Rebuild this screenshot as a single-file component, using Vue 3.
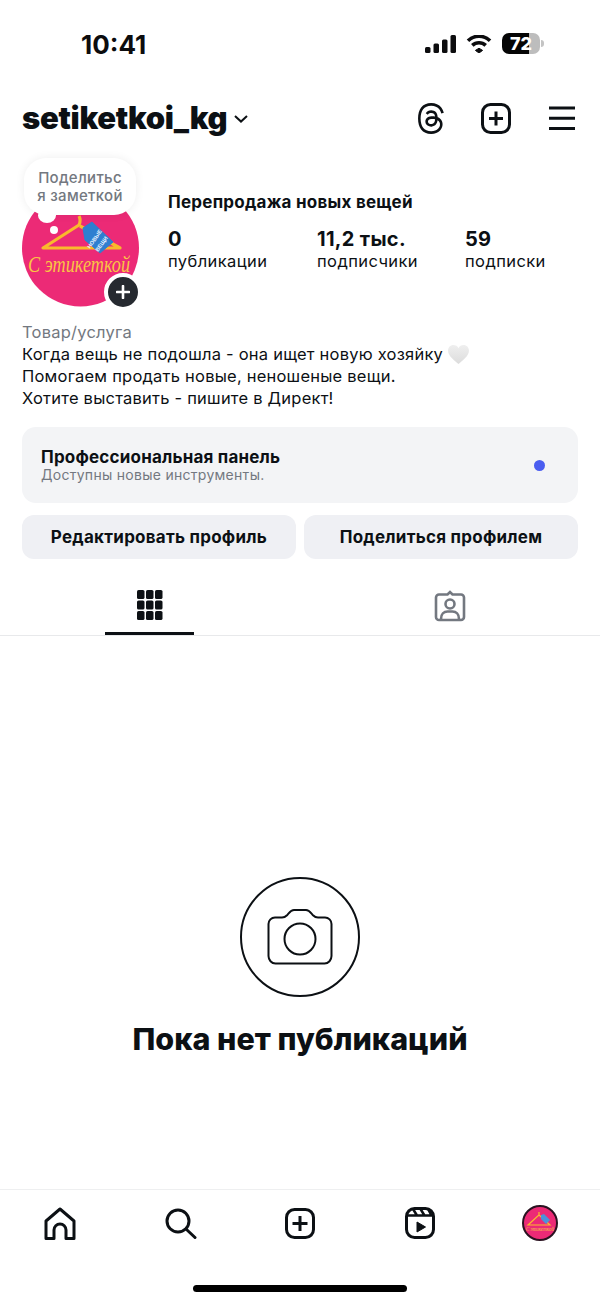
<script setup>
const stats = [
  { value: '0', label: 'публикации' },
  { value: '11,2 тыс.', label: 'подписчики' },
  { value: '59', label: 'подписки' },
]
const threads = 'M141.537 88.9883C140.71 88.5919 139.87 88.2104 139.019 87.8451C137.537 60.5382 122.616 44.905 97.5619 44.745C97.4484 44.7443 97.3355 44.7443 97.222 44.7443C82.2364 44.7443 69.7731 51.1409 62.102 62.7807L75.881 72.2328C81.6116 63.5383 90.6052 61.6848 97.2286 61.6848C97.3051 61.6848 97.3819 61.6848 97.4576 61.6855C105.707 61.7381 111.932 64.1366 115.961 68.814C118.893 72.2193 120.854 76.925 121.825 82.8638C114.511 81.6207 106.601 81.2385 98.145 81.7233C74.3247 83.0954 59.0111 96.9879 60.0396 116.292C60.5615 126.084 65.4397 134.508 73.775 140.011C80.8224 144.663 89.899 146.938 99.3323 146.423C111.79 145.74 121.563 140.987 128.381 132.296C133.559 125.696 136.834 117.143 138.28 106.366C144.217 109.949 148.617 114.664 151.047 120.332C155.179 129.967 155.42 145.8 142.501 158.708C131.182 170.016 117.576 174.908 97.0135 175.059C74.2042 174.89 56.9538 167.575 45.7381 153.317C35.2355 139.966 29.8077 120.682 29.6052 96C29.8077 71.3178 35.2355 52.0336 45.7381 38.6827C56.9538 24.4249 74.2039 17.11 97.0132 16.9405C119.988 17.1113 137.539 24.4614 149.184 38.788C154.894 45.8136 159.199 54.6488 162.037 64.9503L178.184 60.6422C174.744 47.9622 169.331 37.0357 161.965 27.974C147.036 9.60668 125.202 0.195148 97.0695 0H96.9569C68.8816 0.19447 47.2921 9.6418 32.7883 28.0793C19.8819 44.4864 13.2244 67.3157 13.0007 95.9325L13 96L13.0007 96.0675C13.2244 124.684 19.8819 147.514 32.7883 163.921C47.2921 182.358 68.8816 191.806 96.9569 192H97.0695C122.03 191.827 139.624 185.292 154.118 170.811C173.081 151.866 172.51 128.119 166.26 113.541C161.776 103.087 153.227 94.5962 141.537 88.9883ZM98.4405 129.507C88.0005 130.095 77.1544 125.409 76.6196 115.372C76.2232 107.93 81.9158 99.626 99.0812 98.6368C101.047 98.5234 102.976 98.468 104.871 98.468C111.106 98.468 116.939 99.0737 122.242 100.233C120.264 124.935 108.662 128.946 98.4405 129.507Z'
</script>

<template>
  <div class="page">
    <div class="status">
      <span class="time">10:41</span>
      <div class="status-icons">
        <svg class="signal" width="31" height="18" viewBox="0 0 31 18">
          <rect x="0" y="12" width="5.5" height="6" rx="1.5" />
          <rect x="8.5" y="8.5" width="5.5" height="9.5" rx="1.5" />
          <rect x="17" y="4.5" width="5.5" height="13.5" rx="1.5" />
          <rect x="25.5" y="0" width="5.5" height="18" rx="1.5" />
        </svg>
        <svg class="wifi" width="26" height="18" viewBox="0 0 26 18">
          <path d="M13 13.2 16.6 15.4 13 18 9.4 15.4Z" stroke="#0c0c0e" stroke-width="1" stroke-linejoin="round" />
          <path d="M6.3 10.4C10 6.8 16 6.8 19.7 10.4" class="wifi-arc" />
          <path d="M2 5.7C8 -.2 18 -.2 24 5.7" class="wifi-arc" />
        </svg>
        <div class="battery">
          <div class="battery-body"><span class="battery-num">72</span></div>
          <i class="battery-nub"></i>
        </div>
      </div>
    </div>

    <header class="top">
      <div class="user">
        <span class="username">setiketkoi_kg</span>
        <svg width="14" height="8" viewBox="0 0 14 8" class="chev"><path d="M1 1l6 5.6L13 1" /></svg>
      </div>
      <div class="top-icons">
        <svg class="threads" width="30" height="31" viewBox="0 0 192 192" preserveAspectRatio="none"><path :d="threads" /></svg>
        <svg class="line-icon" width="30" height="31" viewBox="0 0 30 31">
          <rect x="1.5" y="1.5" width="27" height="28" rx="8" />
          <path d="M15 8.5v14M8 15.5h14" />
        </svg>
        <svg class="line-icon burger" width="26" height="24" viewBox="0 0 26 24">
          <path d="M0 2h26M0 12.2h26M0 22.5h26" />
        </svg>
      </div>
    </header>

    <section class="profile">
      <div class="avatar-wrap">
        <svg class="avatar" width="117" height="117" viewBox="22 190 117 117">
          <circle cx="80.5" cy="248" r="58.5" fill="#ec2a76" />
          <circle cx="54" cy="230" r="4" fill="#fff" />
          <path d="M79 216c1.500 3 1.500 6 0 9L43 248h77L80 226" fill="none" stroke="#f9b92c" stroke-width="3.200" stroke-linejoin="round" />
          <path d="M83 228 92 222 113 242 100 253 85 240Z" fill="#2e7fd0" stroke="#2e7fd0" stroke-linejoin="round" />
          <text x="96" y="240" class="tag-text" transform="rotate(-55 96 240)" text-anchor="middle">НОВЫЕ</text>
          <text x="103" y="245" class="tag-text" transform="rotate(-55 103 245)" text-anchor="middle">ВЕЩИ</text>
          <text x="28" y="272" class="logo-text" textLength="102" lengthAdjust="spacingAndGlyphs">С этикеткой</text>
        </svg>
        <div class="note">
          <span>Поделитьс</span>
          <span>я заметкой</span>
          <i class="note-tail"></i>
        </div>
        <div class="add-badge">
          <svg width="14" height="14" viewBox="0 0 14 14"><path d="M7 1v12M1 7h12" /></svg>
        </div>
      </div>
      <div class="info">
        <div class="name">Перепродажа новых вещей</div>
        <div class="stats">
          <div v-for="s in stats" :key="s.label" class="stat">
            <div class="stat-value">{{ s.value }}</div>
            <div class="stat-label">{{ s.label }}</div>
          </div>
        </div>
      </div>
    </section>

    <section class="bio">
      <div class="category">Товар/услуга</div>
      <div class="bio-line">Когда вещь не подошла - она ищет новую хозяйку
        <svg class="heart" width="21" height="19" viewBox="0 0 22 20">
          <defs>
            <linearGradient id="hg" x1="0" y1="0" x2="0" y2="1">
              <stop offset="0" stop-color="#efefef" />
              <stop offset="1" stop-color="#dcdcdc" />
            </linearGradient>
          </defs>
          <path d="M11 20C7 16.500 0 11.500 0 6 0 2.500 2.500 0 5.600 0 8 0 10 1.300 11 3.300 12 1.300 14 0 16.400 0 19.500 0 22 2.500 22 6 22 11.500 15 16.500 11 20Z" fill="url(#hg)" />
        </svg>
      </div>
      <div class="bio-line">Помогаем продать новые, неношеные вещи.</div>
      <div class="bio-line">Хотите выставить - пишите в Директ!</div>
    </section>

    <section class="panel">
      <div>
        <div class="panel-title">Профессиональная панель</div>
        <div class="panel-sub">Доступны новые инструменты.</div>
      </div>
      <i class="dot"></i>
    </section>

    <div class="buttons">
      <button class="btn">Редактировать профиль</button>
      <button class="btn">Поделиться профилем</button>
    </div>

    <nav class="tabs">
      <div class="tab">
        <svg width="25.500" height="30" viewBox="0 0 25.500 30" class="grid-icon">
          <rect v-for="c in 9" :key="c" :x="((c - 1) % 3) * 9" :y="Math.floor((c - 1) / 3) * 10.500" width="7.500" height="9" rx="1.600" />
        </svg>
        <i class="tab-bar"></i>
      </div>
      <div class="tab">
        <svg class="tag-icon" width="32" height="32" viewBox="0 0 32 32">
          <path d="M11 4.500h2.500L16 2l2.500 2.500H27a3 3 0 0 1 3 3V27a3 3 0 0 1-3 3H5a3 3 0 0 1-3-3V7.500a3 3 0 0 1 3-3h6Z" />
          <circle cx="16" cy="14" r="4.500" />
          <path d="M7 29c0-5 3-7.500 6.500-7.500h5c3.500 0 6.500 2.500 6.500 7.500" />
        </svg>
      </div>
    </nav>

    <main class="empty">
      <div class="empty-circle">
        <svg width="66" height="56" viewBox="0 0 66 56">
          <path d="M8 8.500h7c2 0 3.500-.8 5-2.300 2.500-2.700 3.800-5.200 7-5.200h12c3.200 0 4.500 2.500 7 5.200 1.500 1.500 3 2.300 5 2.300h7c3.600 0 6.500 2.800 6.500 6.500v32c0 4-3 7.500-7 7.500H8.500c-4 0-7-3.500-7-7.500V15c0-3.700 2.900-6.500 6.500-6.500Z" />
          <circle cx="33" cy="30" r="15.500" />
        </svg>
      </div>
      <h1 class="empty-title">Пока нет публикаций</h1>
    </main>

    <footer class="bottom">
      <div class="bottom-icons">
        <svg class="line-icon" width="32" height="33" viewBox="0 0 32 33">
          <path d="M2 31.500V14L16 2l14 12v17.500H22V23a6 6 0 0 0-12 0v8.500Z" stroke-linejoin="round" />
        </svg>
        <svg class="line-icon" width="33" height="33" viewBox="0 0 33 33">
          <circle cx="14" cy="14" r="11" />
          <path d="M22 22 31 30.500" stroke-linecap="round" />
        </svg>
        <svg class="line-icon" width="30" height="31" viewBox="0 0 30 31">
          <rect x="1.500" y="1.500" width="27" height="28" rx="8" />
          <path d="M15 8v15M7.500 15.500h15" />
        </svg>
        <svg class="line-icon" width="30" height="32" viewBox="0 0 30 32">
          <rect x="1.500" y="1.500" width="27" height="29" rx="8" />
          <path d="M2 8.500h26M8 2l4 6.500M15.500 2l4 6.500M23 2l3.500 6.500" stroke-width="2.500" />
          <path d="M12 15 20.500 20 12 25Z" class="solid" />
        </svg>
        <svg class="mini" width="36" height="36" viewBox="0 0 36 36">
          <circle cx="18" cy="18" r="17" fill="#ec2a76" stroke="#2a1220" stroke-width="2" />
          <path d="M17 7v3L6 20h22L17 10" fill="none" stroke="#f9b92c" stroke-width="1.200" />
          <path d="M19 10l3-1 6 6-4 4-5-5z" fill="#4c93da" />
          <text x="4" y="26" class="mini-text" textLength="28" lengthAdjust="spacingAndGlyphs">С этикеткой</text>
        </svg>
      </div>
      <i class="home-bar"></i>
    </footer>
  </div>
</template>

<style scoped>
.page {
  width: 600px;
  height: 1303px;
  display: flex;
  flex-direction: column;
  background: #fff;
  color: #0c1014;
  font-family: Inter, "Liberation Sans", sans-serif;
  overflow: hidden;
}
i { display: block; }

.status {
  height: 90px;
  flex: none;
  display: flex;
  justify-content: space-between;
  align-items: flex-start;
  padding: 30px 56px 0 81px;
  box-sizing: border-box;
}
.time { font-size: 26px; font-weight: 700; line-height: 30px; color: #0c0c0e; }
.status-icons { display: flex; align-items: center; margin-top: 3px; }
.signal { fill: #0c0c0e; }
.wifi { margin-left: 10px; fill: #0c0c0e; }
.wifi-arc { fill: none; stroke: #0c0c0e; stroke-width: 3.600; }
.battery { display: flex; align-items: center; margin-left: 10px; }
.battery-body {
  width: 38px;
  height: 21px;
  border-radius: 7px;
  background: linear-gradient(90deg, #050505 0 72%, #bdbdbd 72% 100%);
  display: flex;
  align-items: center;
  justify-content: center;
}
.battery-num { color: #fff; font-size: 18px; font-weight: 800; line-height: 21px; }
.battery-nub { width: 3px; height: 7px; margin-left: 1px; border-radius: 0 3px 3px 0; background: #c4c4c4; }

.top {
  height: 56px;
  flex: none;
  display: flex;
  align-items: center;
  justify-content: space-between;
  padding: 0 25px 0 22px;
}
.user { display: flex; align-items: center; }
.username { font-size: 31px; font-weight: 900; letter-spacing: -0.3px; line-height: 36px; }
.chev { margin-left: 7px; fill: none; stroke: #0c1014; stroke-width: 2; margin-top: 1px; }
.top-icons { display: flex; align-items: center; }
.threads { fill: #0c1014; }
.top-icons .line-icon { margin-left: 35px; }
.top-icons .burger { margin-left: 38px; }
.line-icon { fill: none; stroke: #0c1014; stroke-width: 3; }
.solid { fill: #0c1014; stroke: #0c1014; stroke-width: 1; stroke-linejoin: round; }

.profile {
  flex: none;
  display: flex;
  padding: 44px 22px 0;
}
.avatar-wrap { position: relative; width: 117px; height: 117px; flex: none; }
.avatar { display: block; }
.tag-text { font-size: 5.500px; font-weight: 700; fill: #e8f3ff; font-family: "Liberation Sans", sans-serif; }
.logo-text { font-family: "Liberation Serif", serif; font-style: italic; font-size: 22.500px; fill: #f9c444; }
.mini-text { font-family: "Liberation Serif", serif; font-style: italic; font-size: 6.500px; fill: #f9c444; }
.note {
  position: absolute;
  left: 2px;
  top: -32px;
  width: 112px;
  height: 57px;
  box-sizing: border-box;
  padding-top: 11px;
  background: #fff;
  border-radius: 22px;
  box-shadow: 0 0 10px rgba(0, 0, 0, .07);
  display: flex;
  flex-direction: column;
  align-items: center;
  color: #737880;
  font-size: 15px;
  line-height: 18px;
  letter-spacing: .3px;
  font-weight: 500;
}
.note-tail {
  position: absolute;
  left: 14px;
  top: 50px;
  width: 18px;
  height: 15px;
  border-radius: 50%;
  background: #fff;
}
.add-badge {
  position: absolute;
  right: -3px;
  bottom: -4px;
  width: 30px;
  height: 30px;
  border-radius: 50%;
  border: 4px solid #fff;
  background: #262a30;
  display: flex;
  align-items: center;
  justify-content: center;
}
.add-badge svg { fill: none; stroke: #fff; stroke-width: 2.600; stroke-linecap: round; }

.info { margin-left: 29px; flex: 1; }
.name { font-size: 17px; font-weight: 700; line-height: 24px; letter-spacing: .25px; }
.stats { margin-top: 14px; display: grid; grid-template-columns: 149px 148px 1fr; }
.stat-value { font-size: 20px; font-weight: 700; line-height: 22px; letter-spacing: .3px; }
.stat-label { font-size: 16.500px; line-height: 22px; font-weight: 400; letter-spacing: .4px; }

.bio { flex: none; padding: 14px 22px 0; font-size: 16.500px; line-height: 22px; letter-spacing: .22px; }
.category { color: #737880; }
.bio-line { display: flex; align-items: center; height: 22px; white-space: pre-wrap; }
.heart { flex: none; }

.panel {
  flex: none;
  margin: 18px 22px 0;
  height: 76px;
  border-radius: 14px;
  background: #f3f4f6;
  display: flex;
  align-items: center;
  justify-content: space-between;
  padding: 0 33px 0 19px;
}
.panel-title { font-size: 17px; font-weight: 700; line-height: 20px; letter-spacing: .2px; }
.panel-sub { font-size: 14px; line-height: 16px; color: #737880; letter-spacing: .28px; }
.dot { width: 11px; height: 11px; border-radius: 50%; background: #4a5df0; }

.buttons { flex: none; display: grid; grid-template-columns: 1fr 1fr; gap: 8px; margin: 12px 22px 0; }
.btn {
  height: 44px;
  border: 0;
  border-radius: 12px;
  background: #eff0f4;
  color: #0c1014;
  font: 700 17px Inter, "Liberation Sans", sans-serif;
  letter-spacing: .25px;
}

.tabs {
  flex: none;
  height: 77px;
  box-sizing: border-box;
  display: grid;
  grid-template-columns: 1fr 1fr;
  border-bottom: 1px solid #e8e9eb;
}
.tab { position: relative; display: flex; align-items: flex-start; justify-content: center; padding-top: 31px; }
.grid-icon { fill: #0c1014; }
.tag-icon { fill: none; stroke: #737880; stroke-width: 2.600; }
.tab-bar { position: absolute; left: 105px; bottom: 0; width: 89px; height: 3px; background: #0c1014; }

.empty { flex: 1; display: flex; flex-direction: column; align-items: center; padding-top: 241px; }
.empty-circle {
  width: 120px;
  height: 120px;
  box-sizing: border-box;
  border: 2px solid #0c1014;
  border-radius: 50%;
  display: flex;
  align-items: center;
  justify-content: center;
}
.empty-circle svg { fill: none; stroke: #0c1014; stroke-width: 2; }
.empty-title { margin: 24px 0 0; font-size: 30.500px; line-height: 36px; font-weight: 800; }

.bottom {
  flex: none;
  height: 114px;
  box-sizing: border-box;
  border-top: 1px solid #eeeff0;
  display: flex;
  flex-direction: column;
  align-items: center;
}
.bottom-icons {
  width: 100%;
  display: grid;
  grid-template-columns: repeat(5, 120px);
  justify-items: center;
  align-items: center;
  height: 66px;
}
.home-bar { width: 214px; height: 7px; margin-top: 29px; border-radius: 4px; background: #000; }
</style>
